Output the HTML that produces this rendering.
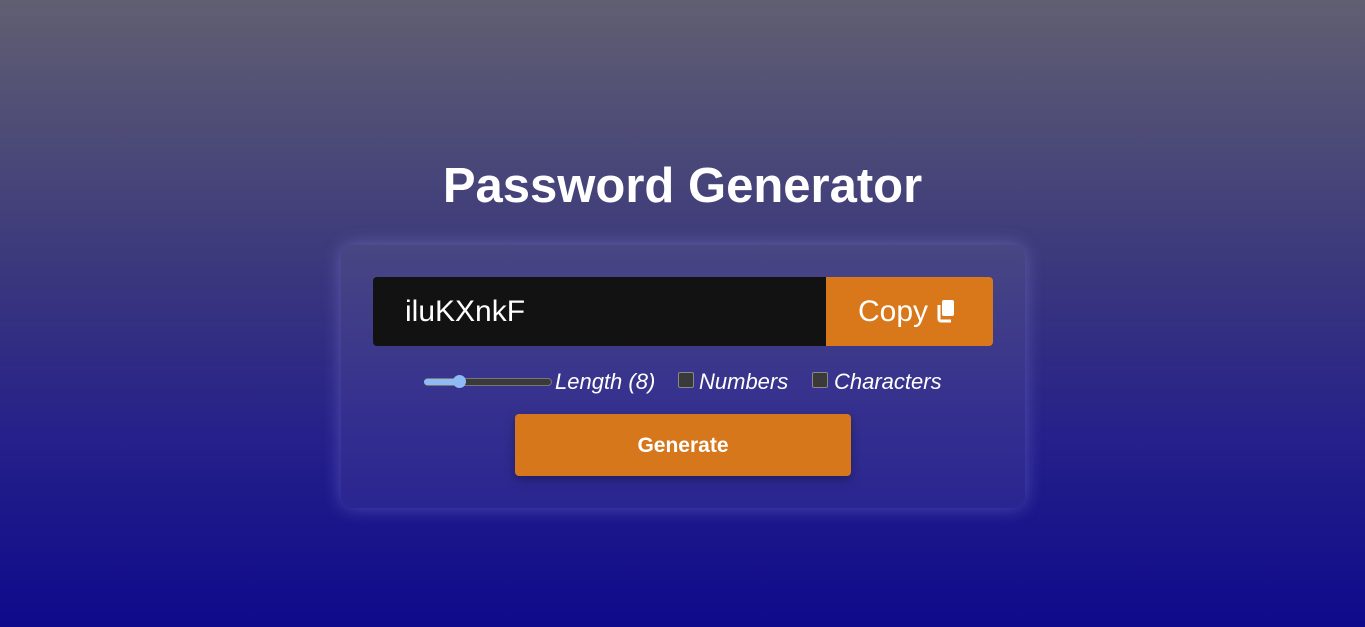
<!DOCTYPE html>
<html><head><style>
html,body{margin:0;padding:0;width:1365px;height:627px;overflow:hidden}
body{background:linear-gradient(180deg,#605f71 0%,#3d3a7c 40%,#25208a 70%,#0e0a8b 100%);font-family:"Liberation Sans",sans-serif;position:relative}
h1{position:absolute;top:156px;left:0;width:1365px;text-align:center;margin:0;color:#fff;font-size:49px;font-weight:bold;line-height:60px}
.card{position:absolute;left:341px;top:245px;width:684px;height:263px;border-radius:12px;background:rgba(255,255,255,0.06);box-shadow:0 0 18px rgba(170,170,255,0.35)}
.inp{position:absolute;left:373px;top:277px;width:453px;height:69px;background:#121212;border-radius:4px 0 0 4px;color:#fff;font-size:30px;line-height:69px;box-sizing:border-box;padding-left:32px}
.copy{position:absolute;left:826px;top:277px;width:167px;height:69px;background:#d8781b;border-radius:0 4px 4px 0;color:#fff;font-size:30px;line-height:69px;box-sizing:border-box;padding-left:32px}
.row{position:absolute;top:368px;left:0;width:1365px;height:28px;color:#fff;font-style:italic;font-size:22px}
.row span{position:absolute;top:0;line-height:28px}
.track{position:absolute;left:424px;top:378px;width:126px;height:6px;background:#3a3a3a;border:1px solid #777;border-radius:4px}
.fill{position:absolute;left:424px;top:379px;width:36px;height:6px;background:#8fbaf5;border-radius:4px}
.thumb{position:absolute;left:453px;top:375px;width:13px;height:13px;background:#8fbaf5;border-radius:50%}
.cb{position:absolute;top:372px;width:16px;height:16px;background:#3a3a3a;border:1px solid #888;border-radius:2px;box-sizing:border-box}
.gen{position:absolute;left:515px;top:414px;width:336px;height:62px;background:#d6771b;border-radius:4px;color:#fff;font-weight:bold;font-size:21px;line-height:64px;text-align:center;box-shadow:0 4px 10px rgba(0,0,0,0.3)}
</style></head><body>
<h1>Password Generator</h1>
<div class="card"></div>
<div class="inp">iluKXnkF</div>
<div class="copy">Copy <svg width="20" height="24" viewBox="0 0 20 24" style="vertical-align:-2px"><rect x="6" y="1" width="12" height="16" rx="2" fill="#fff"/><path d="M3 6v14a2 2 0 0 0 2 2h10" stroke="#fff" stroke-width="3" fill="none"/></svg></div>
<div class="track"></div><div class="fill"></div><div class="thumb"></div>
<div class="row">
<span style="left:555px">Length (8)</span>
<span style="left:699px">Numbers</span>
<span style="left:834px">Characters</span>
</div>
<div class="cb" style="left:678px"></div>
<div class="cb" style="left:812px"></div>
<div class="gen">Generate</div>
</body></html>
